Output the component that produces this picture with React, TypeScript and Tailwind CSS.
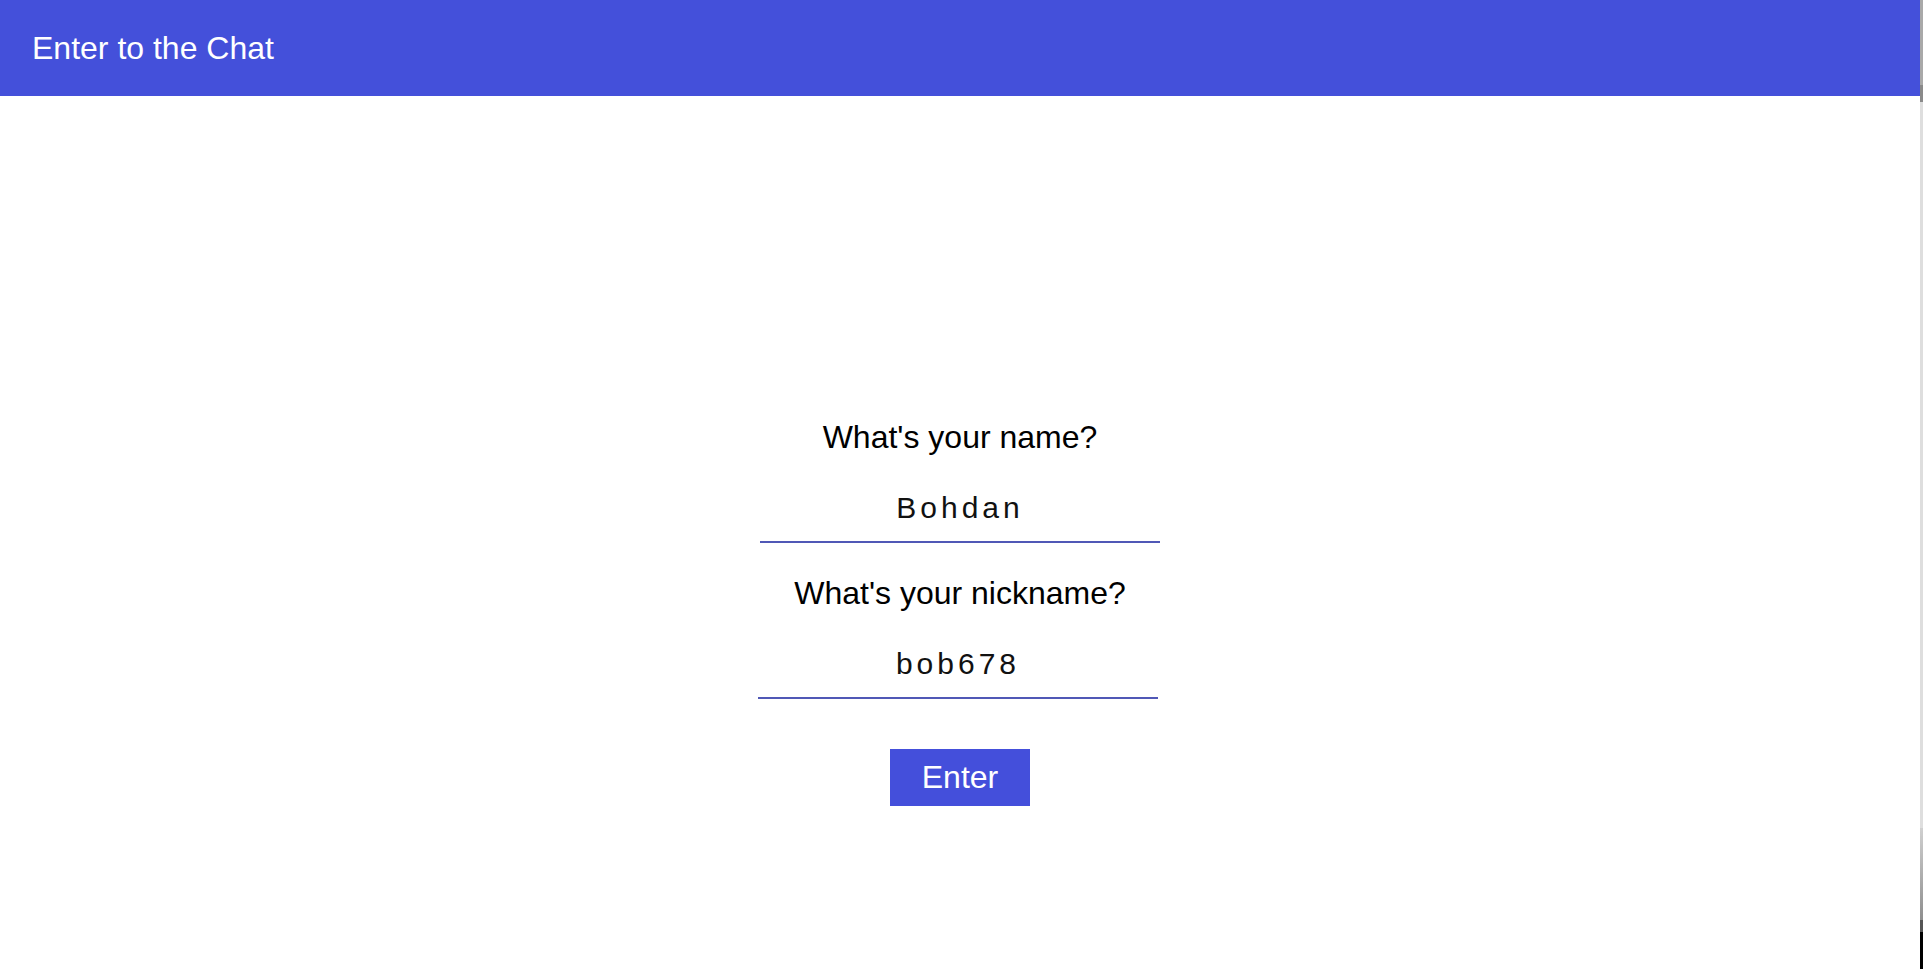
import React, { useState } from 'react';

const font = { fontFamily: '"Liberation Sans", Arial, sans-serif' };

const App: React.FC = () => {
  const [name, setName] = useState('Bohdan');
  const [nickname, setNickname] = useState('bob678');

  return (
    <div className="flex h-[969px] w-full overflow-hidden bg-white" style={font}>
      <div className="flex flex-1 flex-col">
        {/* Header */}
        <header className="flex h-[96px] items-center bg-[#4450da] pl-[32px]">
          <h1 className="text-[32px] leading-[37px] font-normal text-white">Enter to the Chat</h1>
        </header>

        {/* Form */}
        <main className="flex flex-1 flex-col items-center pt-[323px]">
          <label className="h-[37px] text-[32px] leading-[37px] text-black">What's your name?</label>
          <input
            type="text"
            value={name}
            onChange={(e) => setName(e.target.value)}
            className="box-border h-[87px] w-[400px] border-b-2 border-[#5058b6] bg-transparent pt-[35px] pb-[17px] text-center text-[30px] tracking-[4px] text-[#111] outline-none"
          />

          <label className="mt-[32px] h-[37px] text-[32px] leading-[37px] text-black">What's your nickname?</label>
          <input
            type="text"
            value={nickname}
            onChange={(e) => setNickname(e.target.value)}
            className="mr-[4px] box-border h-[87px] w-[400px] border-b-2 border-[#5058b6] bg-transparent pt-[35px] pb-[17px] text-center text-[30px] tracking-[4px] text-[#111] outline-none"
          />

          <button className="mt-[50px] flex h-[57px] w-[140px] items-center justify-center bg-[#444fdb] text-[32px] leading-[37px] text-white">
            Enter
          </button>
        </main>
      </div>

      {/* scrollbar strip */}
      <div className="flex w-[3px] flex-col">
        <div className="h-[85px] bg-[#a9a9a9]" />
        <div className="h-[17px] bg-[#8a8a8a]" />
        <div className="flex-1 bg-[#dedede]" />
        <div className="h-[92px] bg-gradient-to-b from-[#d0d0d0] to-[#8f8f8f]" />
        <div className="h-[12px] bg-[#555]" />
        <div className="h-[37px] bg-black" />
      </div>
    </div>
  );
};

export default App;
